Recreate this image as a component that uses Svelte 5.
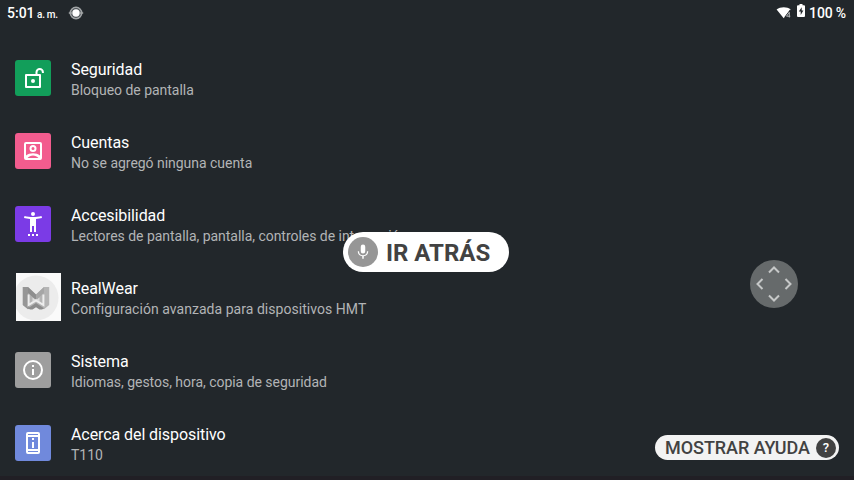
<script>
  const rows = [
    { icon: 'lock', color: '#129e5a', title: 'Seguridad', sub: 'Bloqueo de pantalla' },
    { icon: 'account', color: '#f25c8e', title: 'Cuentas', sub: 'No se agregó ninguna cuenta' },
    { icon: 'access', color: '#7b3be6', title: 'Accesibilidad', sub: 'Lectores de pantalla, pantalla, controles de interacción' },
    { icon: 'brand', color: '#fafafa', title: 'RealWear', sub: 'Configuración avanzada para dispositivos HMT' },
    { icon: 'info', color: '#9e9e9e', title: 'Sistema', sub: 'Idiomas, gestos, hora, copia de seguridad' },
    { icon: 'device', color: '#7089dc', title: 'Acerca del dispositivo', sub: 'T110' }
  ];
  const paths = {
    account: 'M19 3H5a2 2 0 0 0-2 2v14a2 2 0 0 0 2 2h14a2 2 0 0 0 2-2V5a2 2 0 0 0-2-2zm0 2v11.6c-1.8-1.6-4.4-2.4-7-2.4s-5.2.8-7 2.4V5zM6.5 19c1.4-1.7 3.4-2.6 5.5-2.6s4.100.900 5.500 2.600zM12 13a3.500 3.500 0 1 0 0-7 3.500 3.500 0 0 0 0 7zm0-2a1.500 1.500 0 1 1 0-3 1.500 1.500 0 0 1 0 3z',
    access: 'M20.500 4c-2.610.700-5.670 1-8.500 1s-5.890-.300-8.500-1L3 6c1.860.500 4 .830 6 1v13h2v-6h2v6h2V7c2-.170 4.140-.500 6-1zM12 4a2 2 0 1 0 0-4 2 2 0 0 0 0 4zM7 24h2v-2H7zm4 0h2v-2h-2zm4 0h2v-2h-2z',
    info: 'M11 7h2v2h-2zm0 4h2v6h-2zm1-9a10 10 0 1 0 0 20 10 10 0 0 0 0-20zm0 18a8 8 0 1 1 0-16 8 8 0 0 1 0 16z',
    device: 'M13 7h-2v2h2zm0 4h-2v6h2zm4-10H7a2 2 0 0 0-2 2v18a2 2 0 0 0 2 2h10a2 2 0 0 0 2-2V3a2 2 0 0 0-2-2zm0 20H7v-1h10zm0-3H7V6h10zm0-14H7V3h10z'
  };
</script>

<div class="screen">
  <header>
    <span class="time">5:01</span><span class="ampm">a. m.</span>
    <svg class="target" width="16" height="14" viewBox="0 0 16 14">
      <circle cx="8" cy="7" r="5.700" fill="#50565a" stroke="#a2a5a7" stroke-width="1.500" />
      <path d="M.8 7H4M12 7h3.200" stroke="#a2a5a7" stroke-width="1.500" />
      <circle cx="8" cy="7" r="3.700" fill="#fff" />
    </svg>
    <span class="fill"></span>
    <svg class="wifi" width="16" height="14" viewBox="0 0 16 14">
      <path d="M.6 3.600C4.500.500 11 .500 14.800 3.600L7.700 12.300z" fill="#fff" />
      <path d="M13.300 11.500V6.300l-2.800 3.900h3.800" fill="none" stroke="#22272b" stroke-width="2.200" />
      <path d="M13.300 11.500V6.300l-2.800 3.900h3.800" fill="none" stroke="#b4b7b9" stroke-width="1" />
    </svg>
    <svg class="battery" width="8" height="13" viewBox="0 0 8 13">
      <path d="M2.500 0h3v1.300H7q1 0 1 1V12q0 1-1 1H1q-1 0-1-1V2.300q0-1 1-1h1.500z" fill="#fff" />
      <path d="M4.700 3.200L1.800 7.500h1.900V11l2.700-4.500H4.700z" fill="#22272b" />
    </svg>
    <span class="percent">100 %</span>
  </header>

  <main>
    {#each rows as row}
      <div class="row">
        <div class="slot">
          <div class="tile" class:brand={row.icon === 'brand'} style:background={row.color}>
            {#if row.icon === 'lock'}
              <svg width="24" height="24" viewBox="0 0 24 24">
                <path d="M5 9h14v12H5zM15.500 9V6.200a3.200 3.200 0 0 1 6.400 0V7" fill="none" stroke="#fff" stroke-width="2" stroke-linejoin="round" />
                <circle cx="12" cy="15" r="2" fill="#fff" />
              </svg>
            {:else if row.icon === 'brand'}
              <svg class="logo" width="45" height="48" viewBox="0 0 45 48">
                <circle cx="20" cy="25" r="22.500" fill="#ececec" />
                <path d="M6.800 14H12l8 7.500 8-7.500h5.200v18L28 36.300l-8-5-8 5L6.800 32z" fill="#b4b4b4" />
                <path d="M6.800 14H12v17.500L14 35l-2 1.300L6.800 32z" fill="#969696" />
                <path d="M12 14l8 7.500V27l-8-7z" fill="#8e8e8e" />
                <path d="M28 14l-8 7.500V27l8-7z" fill="#a6a6a6" />
                <path d="M12.600 21.500V32l7.400-4.700L27.400 32V21.500" fill="none" stroke="#ededed" stroke-width="2" />
                <path d="M16.500 24.500v4.300l3.500-2.300 3.500 2.300v-4.300L20 27.300z" fill="#dcdcdc" />
                <path d="M12 35.300l8-5.300 8 5.300-2 1.100h-2.500L20 34.300l-3.500 2.100H14z" fill="#8c8c8c" />
              </svg>
            {:else}
              <svg width="24" height="24" viewBox="0 0 24 24"><path d={paths[row.icon]} fill="#fff" fill-rule="evenodd" /></svg>
            {/if}
          </div>
        </div>
        <div class="text">
          <div class="title">{row.title}</div>
          <div class="sub" class:wide={row.icon === 'brand'}>{row.sub}</div>
        </div>
      </div>
    {/each}
  </main>

  <div class="edge"></div>

  <div class="back">
    <span class="mic">
      <svg width="18" height="18" viewBox="0 0 24 24">
        <path d="M12 14a3 3 0 0 0 3-3V5a3 3 0 0 0-6 0v6a3 3 0 0 0 3 3zm5.300-3a5.300 5.300 0 0 1-10.600 0H5a7 7 0 0 0 6 6.700V21h2v-3.300A7 7 0 0 0 19 11z" fill="#fff" />
      </svg>
    </span>
    <span class="label">IR ATRÁS</span>
  </div>

  <svg class="pad" width="49" height="49" viewBox="0 0 49 49">
    <circle cx="24" cy="24" r="24" fill="#666a6b" />
    <path d="M19 12.500l5-5 5 5M19 35.500l5 5 5-5M12.500 19l-5 5 5 5M35.500 19l5 5-5 5" fill="none" stroke="#c6c8c8" stroke-width="2" />
  </svg>

  <div class="help">
    <span>MOSTRAR AYUDA</span>
    <span class="q">?</span>
  </div>
</div>

<style>
  .screen {
    position: relative;
    width: 854px;
    height: 480px;
    overflow: hidden;
    background: #22272b;
    color: #fff;
    font-family: Roboto, sans-serif;
  }
  header {
    display: flex;
    align-items: center;
    box-sizing: border-box;
    height: 42px;
    padding: 0 8px 17px 7px;
    white-space: nowrap;
  }
  .time { font-size: 14px; font-weight: 500; }
  .ampm { font-size: 10px; font-weight: 500; letter-spacing: -0.3px; margin: 3px 0 0 2.5px; }
  .target { margin-left: 10px; }
  .fill { flex: 1; }
  .wifi { margin-right: 5px; }
  .battery { margin: 0 4px 4px 0; }
  .percent { font-size: 14px; font-weight: 500; letter-spacing: -0.15px; }
  .row { display: flex; height: 73px; }
  .slot { width: 71px; flex: none; }
  .tile {
    display: flex;
    align-items: center;
    justify-content: center;
    width: 36px;
    height: 36px;
    margin: 18px 0 0 15px;
    border-radius: 3px;
  }
  .tile.brand { width: 45px; height: 48px; margin: 12px 0 0 16px; border-radius: 0; }
  .logo { filter: blur(0.5px); }
  .text { padding-top: 18px; white-space: nowrap; }
  .title { font-size: 16px; line-height: 20px; letter-spacing: -0.08px; }
  .sub { font-size: 14px; line-height: 20px; letter-spacing: -0.03px; color: #b2b4b6; }
  .sub.wide { letter-spacing: 0.04px; }
  .edge { position: absolute; left: 0; right: 0; bottom: 0; height: 4px; background: #211f25; }
  .back {
    position: absolute;
    left: 343px;
    top: 232px;
    display: flex;
    align-items: center;
    gap: 8px;
    box-sizing: border-box;
    width: 166px;
    height: 40px;
    padding-left: 5px;
    border-radius: 20px;
    background: #fff;
    color: #424242;
    font-size: 24px;
    font-weight: 700;
    white-space: nowrap;
  }
  .label { padding-top: 2px; }
  .mic {
    display: flex;
    align-items: center;
    justify-content: center;
    width: 30px;
    height: 30px;
    border-radius: 50%;
    background: #969696;
  }
  .pad { position: absolute; left: 750px; top: 260px; }
  .help {
    position: absolute;
    left: 655px;
    top: 435px;
    display: flex;
    align-items: center;
    justify-content: space-between;
    box-sizing: border-box;
    width: 184px;
    height: 25px;
    padding: 0 3px 0 10px;
    border-radius: 13px;
    background: #f3f3f3;
    color: #424242;
    font-size: 18px;
    font-weight: 500;
    letter-spacing: -0.05px;
    white-space: nowrap;
  }
  .q {
    width: 20px;
    height: 20px;
    border-radius: 50%;
    background: #424242;
    color: #fff;
    font-size: 13px;
    line-height: 20px;
    text-align: center;
  }
</style>
